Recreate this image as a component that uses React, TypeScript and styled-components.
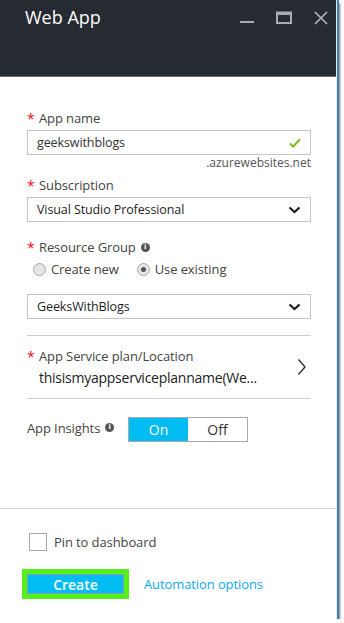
import React from "react"
import styled, { createGlobalStyle } from "styled-components"

const GlobalStyles = createGlobalStyle`
    *, *::before, *::after { box-sizing: border-box; margin: 0; padding: 0; }
    body {
        background: #fff;
        font-family: "Open Sans", "Noto Sans", sans-serif;
        -webkit-font-smoothing: antialiased;
    }
`

const Window = styled.div`
    width: 336px;
    height: 619px;
    display: flex;
    flex-direction: column;
    background: #fff;
    box-shadow: 1px 0 0 #e8e8e8, 3px 0 0 #3d83b3, 4px 3px 2px rgba(0, 0, 0, 0.55);
`

const Header = styled.div`
    height: 77px;
    background: #262b31;
    border-bottom: 1px solid #6d7278;
    display: flex;
    align-items: flex-start;
    justify-content: space-between;
    padding: 3px 8px 0 25px;
`

const Title = styled.h1`
    color: #fff;
    font-size: 18px;
    font-weight: 400;
    line-height: 28px;
`

const Controls = styled.div`
    display: flex;
    align-items: flex-start;
    gap: 22px;
    padding-top: 8px;
`

const Body = styled.div`
    flex: 1;
    padding: 31px 25px 0 27px;
    display: flex;
    flex-direction: column;
`

const Label = styled.div<{ $mt?: number }>`
    display: flex;
    align-items: center;
    height: 20px;
    font-size: 13px;
    letter-spacing: -0.1px;
    color: #444;
    margin-top: ${p => p.$mt ?? 0}px;
    margin-bottom: 2px;
`

const Star = styled.span`
    color: #e81123;
    width: 12px;
    font-size: 14px;
`

const Field = styled.div<{ $dark?: boolean }>`
    height: 25px;
    border: 1px solid #c6c6c6;
    padding: 0 9px;
    display: flex;
    align-items: center;
    justify-content: space-between;
    font-size: 12.5px;
    letter-spacing: -0.1px;
    color: ${p => (p.$dark ? "#1e1e1e" : "#333")};
`

const Suffix = styled.div`
    text-align: right;
    font-size: 12px;
    line-height: 16px;
    color: #555;
`

const RadioRow = styled.div`
    display: flex;
    align-items: center;
    height: 20px;
    padding-left: 6px;
    margin-bottom: 15px;
`

const RadioOption = styled.label`
    display: flex;
    align-items: center;
    gap: 5px;
    font-size: 13px;
    letter-spacing: -0.1px;
    color: #444;
    margin-right: 18px;
`

const Radio = styled.span<{ $checked?: boolean }>`
    width: 13px;
    height: 13px;
    border-radius: 50%;
    border: 1px solid #a8a8a8;
    background: #e6e6e6;
    display: flex;
    align-items: center;
    justify-content: center;
    &::after {
        content: "";
        width: 5px;
        height: 5px;
        border-radius: 50%;
        background: ${p => (p.$checked ? "#555" : "transparent")};
    }
`

const Divider = styled.div<{ $mt: number }>`
    height: 1px;
    background: #cfcfcf;
    margin-top: ${p => p.$mt}px;
`

const PlanRow = styled.div`
    display: flex;
    align-items: center;
    justify-content: space-between;
    margin-top: 10px;
`

const PlanValue = styled.div`
    font-size: 14px;
    letter-spacing: -0.25px;
    color: #222;
    padding-left: 12px;
    line-height: 20px;
`

const InsightsRow = styled.div`
    display: flex;
    align-items: center;
    margin-top: 18px;
`

const InsightsLabel = styled.span`
    font-size: 13px;
    letter-spacing: -0.1px;
    color: #444;
    display: flex;
    align-items: center;
    gap: 5px;
    width: 101px;
    margin-top: -4px;
`

const Info = styled.span`
    width: 9px;
    height: 9px;
    border-radius: 50%;
    background: #555;
    color: #fff;
    font-size: 7px;
    font-weight: 700;
    line-height: 9px;
    text-align: center;
    font-family: "DejaVu Sans", sans-serif;
`

const Toggle = styled.div`
    display: flex;
    border: 1px solid #a9a9a9;
`

const ToggleOption = styled.div<{ $on?: boolean }>`
    width: 59px;
    height: 23px;
    display: flex;
    align-items: center;
    justify-content: center;
    font-size: 14px;
    background: ${p => (p.$on ? "#00bcf2" : "#fff")};
    color: ${p => (p.$on ? "#fff" : "#333")};
`

const Footer = styled.div`
    height: 111px;
    border-top: 1px solid #d4d4d4;
    padding: 24px 0 0 22px;
`

const CheckRow = styled.label`
    display: flex;
    align-items: center;
    gap: 7px;
    padding-left: 7px;
    font-size: 13px;
    letter-spacing: -0.1px;
    color: #444;
`

const Checkbox = styled.span`
    width: 18px;
    height: 18px;
    border: 1px solid #a8a8a8;
    background: #fff;
`

const ButtonRow = styled.div`
    display: flex;
    align-items: center;
    gap: 15px;
    margin-top: 18px;
`

const CreateButton = styled.button`
    width: 107px;
    height: 30px;
    border: 5px solid #56ef1a;
    background: #00bcf2;
    box-shadow: inset 0 0 0 1px #7fa7b5;
    color: #fff;
    font-family: inherit;
    font-size: 14px;
    font-weight: 600;
`

const Link = styled.span`
    color: #10a8e8;
    font-size: 13px;
    letter-spacing: -0.1px;
`

const Chevron = () => (
    <svg width="13" height="8" viewBox="0 0 13 8">
        <path d="M1.5 1.5 L6.5 6 L11.5 1.5" fill="none" stroke="#1e1e1e" strokeWidth="2.2" />
    </svg>
)

export default function App() {
    return (
        <>
            <GlobalStyles />
            <Window>
                <Header>
                    <Title>Web App</Title>
                    <Controls>
                        <svg width="14" height="14" viewBox="0 0 14 14">
                            <rect x="0" y="10" width="14" height="2" fill="#a9acaf" />
                        </svg>
                        <svg width="16" height="13" viewBox="0 0 16 13">
                            <rect x="1" y="1.5" width="14" height="10.5" fill="none" stroke="#a9acaf" strokeWidth="2" />
                            <rect x="1" y="1" width="14" height="3" fill="#a9acaf" />
                        </svg>
                        <svg width="14" height="14" viewBox="0 0 14 14">
                            <path d="M1 1 L13 13 M13 1 L1 13" stroke="#b4b7ba" strokeWidth="1.6" />
                        </svg>
                    </Controls>
                </Header>
                <Body>
                    <Label><Star>*</Star>App name</Label>
                    <Field>
                        geekswithblogs
                        <svg width="12" height="10" viewBox="0 0 12 10">
                            <path d="M1 5.5 L4.2 8.5 L11 1.2" fill="none" stroke="#7cba1f" strokeWidth="2" />
                        </svg>
                    </Field>
                    <Suffix>.azurewebsites.net</Suffix>
                    <Label $mt={4}><Star>*</Star>Subscription</Label>
                    <Field $dark>
                        Visual Studio Professional
                        <Chevron />
                    </Field>
                    <Label $mt={15}>
                        <Star>*</Star>Resource Group
                        <Info style={{ marginLeft: 5 }}>i</Info>
                    </Label>
                    <RadioRow>
                        <RadioOption><Radio />Create new</RadioOption>
                        <RadioOption><Radio $checked />Use existing</RadioOption>
                    </RadioRow>
                    <Field $dark>
                        GeeksWithBlogs
                        <Chevron />
                    </Field>
                    <Divider $mt={16} />
                    <PlanRow>
                        <div>
                            <Label><Star>*</Star>App Service plan/Location</Label>
                            <PlanValue>thisismyappserviceplanname(We...</PlanValue>
                        </div>
                        <svg width="10" height="18" viewBox="0 0 10 18" style={{ marginRight: 4 }}>
                            <path d="M1.5 1.5 L8 9 L1.5 16.5" fill="none" stroke="#333" strokeWidth="1.4" />
                        </svg>
                    </PlanRow>
                    <Divider $mt={10} />
                    <InsightsRow>
                        <InsightsLabel>App Insights <Info>i</Info></InsightsLabel>
                        <Toggle>
                            <ToggleOption $on>On</ToggleOption>
                            <ToggleOption>Off</ToggleOption>
                        </Toggle>
                    </InsightsRow>
                </Body>
                <Footer>
                    <CheckRow><Checkbox />Pin to dashboard</CheckRow>
                    <ButtonRow>
                        <CreateButton>Create</CreateButton>
                        <Link>Automation options</Link>
                    </ButtonRow>
                </Footer>
            </Window>
        </>
    )
}
